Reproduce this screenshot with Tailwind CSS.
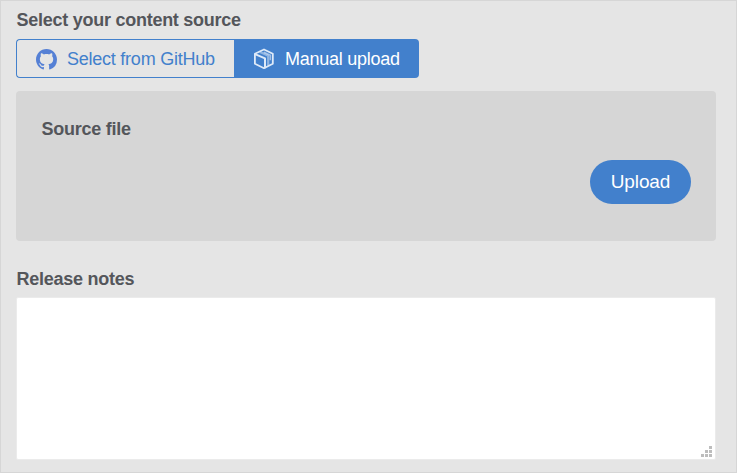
<!DOCTYPE html>
<html lang="en">
<head>
<meta charset="utf-8">
<title>Content source</title>
<script src="https://cdn.jsdelivr.net/npm/@tailwindcss/browser@4"></script>
</head>
<body class="h-[473px] w-[737px] overflow-hidden border border-[#d6d6d6] bg-[#e5e5e5] pr-[20px] pl-[15px] pt-[8px] font-['Liberation_Sans',Arial,sans-serif] text-[18px] leading-[22px] tracking-[-0.26px] text-[#54565b]">
  <h2 class="pl-[0.5px] font-bold">Select your content source</h2>
  <div class="mt-[8px] flex h-[39px]">
    <button class="flex w-[218px] items-center rounded-l-[4px] border border-r-0 border-[#4280cc] pl-[19px] tracking-[-0.24px] text-[#4280cc]">
      <svg class="mt-px mr-[10px] h-[21px] w-[21px] shrink-0" viewBox="0 0 16 16" fill="#5580d5"><path d="M8 0C3.58 0 0 3.58 0 8c0 3.54 2.29 6.53 5.47 7.59.4.07.55-.17.55-.38 0-.19-.01-.82-.01-1.49-2.01.37-2.53-.49-2.69-.94-.09-.23-.48-.94-.82-1.13-.28-.15-.68-.52-.01-.53.63-.01 1.08.58 1.23.82.72 1.21 1.87.87 2.33.66.07-.52.28-.87.51-1.07-1.78-.2-3.64-.89-3.64-3.95 0-.87.31-1.59.82-2.15-.08-.2-.36-1.02.08-2.12 0 0 .67-.21 2.2.82.64-.18 1.32-.27 2-.27s1.36.09 2 .27c1.53-1.04 2.2-.82 2.2-.82.44 1.1.16 1.92.08 2.12.51.56.82 1.27.82 2.15 0 3.07-1.87 3.75-3.65 3.95.29.25.54.73.54 1.48 0 1.07-.01 1.93-.01 2.2 0 .21.15.46.55.38A8.01 8.01 0 0 0 16 8c0-4.42-3.58-8-8-8z"/></svg>
      <span class="whitespace-nowrap">Select from GitHub</span>
    </button>
    <button class="flex w-[185px] items-center rounded-r-[4px] bg-[#4280cc] pl-[19px] tracking-[-0.26px] text-white">
      <svg class="mt-px mr-[10px] h-[22px] w-[22px] shrink-0" viewBox="0 0 22 22" fill="none" stroke="#dfeaf8" stroke-width="1.8" stroke-linejoin="round"><path d="M11 1.5 19.8 5.8v10L11 20.2 1.9 15.8v-10z"/><path d="M2 6.2 12 10.4v9.8" stroke-width="2"/><path d="M7 4.1 15.2 7.8v10" stroke-opacity=".5" stroke-width="2.2"/><path d="M10.8 4.2 17.3 7.2v5" stroke-width="1.5" stroke-opacity=".6"/></svg>
      <span class="whitespace-nowrap">Manual upload</span>
    </button>
  </div>
  <section class="mt-[13px] flex h-[150px] flex-col rounded-[4px] bg-[#d6d6d6] px-[25px] pt-[27px]">
    <h3 class="pl-[0.5px] font-bold">Source file</h3>
    <button class="mt-[20px] h-[44px] w-[101px] self-end rounded-full bg-[#4280cc] text-[19px] tracking-[-0.1px] text-white">Upload</button>
  </section>
  <h3 class="mt-[27px] pl-[0.5px] font-bold">Release notes</h3>
  <div class="mt-[7px] flex h-[163px] items-end justify-end rounded-[2px] border border-[#ebebeb] bg-white pr-[3px] pb-[2px]">
    <svg class="h-[11px] w-[11px]" viewBox="0 0 11 11" fill="#bdbdbd" shape-rendering="crispEdges"><path d="M8 0h3v3H8zM4 4h3v3H4zM8 4h3v3H8zM0 8h3v3H0zM4 8h3v3H4zM8 8h3v3H8z"/></svg>
  </div>
</body>
</html>
